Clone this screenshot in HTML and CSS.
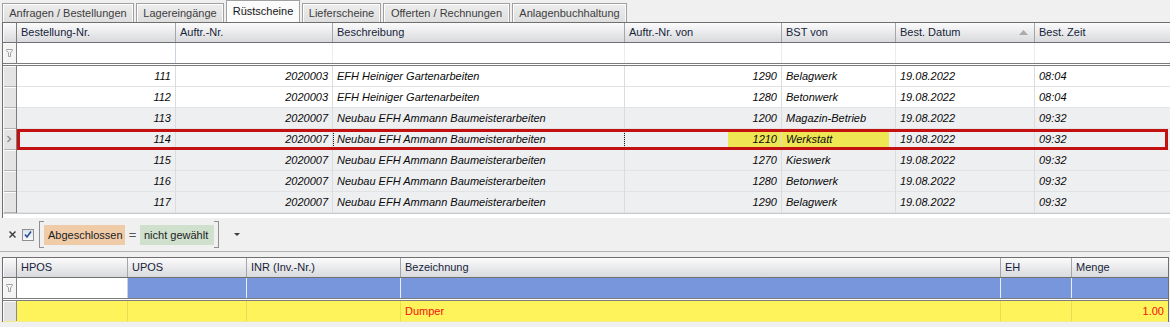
FILE: index.html
```html
<!DOCTYPE html>
<html lang="de">
<head>
    <meta charset="UTF-8">
    <title>Rüstscheine</title>
    <link rel="stylesheet" href="styles.css">
</head>
<body>
    <div class="tabs">
        <div class="tab t1">Anfragen / Bestellungen</div>
        <div class="tab t2">Lagereingänge</div>
        <div class="tab t3 active">Rüstscheine</div>
        <div class="tab t4">Lieferscheine</div>
        <div class="tab t5">Offerten / Rechnungen</div>
        <div class="tab t6">Anlagenbuchhaltung</div>
    </div>

    <div class="grid grid-top">
        <div class="row head">
            <div class="ind"></div>
            <div class="cell">Bestellung-Nr.</div>
            <div class="cell">Auftr.-Nr.</div>
            <div class="cell">Beschreibung</div>
            <div class="cell">Auftr.-Nr. von</div>
            <div class="cell">BST von</div>
            <div class="cell sorted"><span>Best. Datum</span>
                <svg width="9" height="5" viewBox="0 0 9 5"><path d="M0 5 L4.5 0 L9 5 Z" fill="#a9abae"/></svg>
            </div>
            <div class="cell">Best. Zeit</div>
        </div>
        <div class="row filter">
            <div class="ind">
                <svg width="7" height="8" viewBox="0 0 7 8"><path d="M0.5 0.5 H6.5 V1.5 L4.5 3.8 V7.5 H2.5 V3.8 L0.5 1.5 Z" fill="none" stroke="#a2a2a2"/></svg>
            </div>
            <div class="cell"></div><div class="cell"></div><div class="cell"></div><div class="cell"></div>
            <div class="cell"></div><div class="cell"></div><div class="cell"></div>
        </div>

        <div class="row">
            <div class="ind"></div>
            <div class="cell num">111</div><div class="cell num">2020003</div>
            <div class="cell">EFH Heiniger Gartenarbeiten</div><div class="cell num">1290</div>
            <div class="cell">Belagwerk</div><div class="cell">19.08.2022</div><div class="cell">08:04</div>
        </div>
        <div class="row">
            <div class="ind"></div>
            <div class="cell num">112</div><div class="cell num">2020003</div>
            <div class="cell">EFH Heiniger Gartenarbeiten</div><div class="cell num">1280</div>
            <div class="cell">Betonwerk</div><div class="cell">19.08.2022</div><div class="cell">08:04</div>
        </div>
        <div class="row alt">
            <div class="ind"></div>
            <div class="cell num">113</div><div class="cell num">2020007</div>
            <div class="cell">Neubau EFH Ammann Baumeisterarbeiten</div><div class="cell num">1200</div>
            <div class="cell">Magazin-Betrieb</div><div class="cell">19.08.2022</div><div class="cell">09:32</div>
        </div>
        <div class="row alt current">
            <span class="mark"></span>
            <div class="ind">
                <svg width="14" height="20" viewBox="0 0 14 20"><polyline points="4.5,7 7.5,10 4.5,13" fill="none" stroke="#8d8d8d" stroke-width="1.4"/></svg>
            </div>
            <div class="cell num">114</div><div class="cell num">2020007</div>
            <div class="cell focused">Neubau EFH Ammann Baumeisterarbeiten</div><div class="cell num">1210</div>
            <div class="cell">Werkstatt</div><div class="cell">19.08.2022</div><div class="cell">09:32</div>
        </div>
        <div class="row alt">
            <div class="ind"></div>
            <div class="cell num">115</div><div class="cell num">2020007</div>
            <div class="cell">Neubau EFH Ammann Baumeisterarbeiten</div><div class="cell num">1270</div>
            <div class="cell">Kieswerk</div><div class="cell">19.08.2022</div><div class="cell">09:32</div>
        </div>
        <div class="row alt">
            <div class="ind"></div>
            <div class="cell num">116</div><div class="cell num">2020007</div>
            <div class="cell">Neubau EFH Ammann Baumeisterarbeiten</div><div class="cell num">1280</div>
            <div class="cell">Betonwerk</div><div class="cell">19.08.2022</div><div class="cell">09:32</div>
        </div>
        <div class="row alt">
            <div class="ind"></div>
            <div class="cell num">117</div><div class="cell num">2020007</div>
            <div class="cell">Neubau EFH Ammann Baumeisterarbeiten</div><div class="cell num">1290</div>
            <div class="cell">Belagwerk</div><div class="cell">19.08.2022</div><div class="cell">09:32</div>
        </div>
        <div class="grid-end"></div>
    </div>

    <div class="filter-panel">
        <svg class="close" width="7" height="7" viewBox="0 0 7 7"><path d="M0.5 0.5 L6.5 6.5 M6.5 0.5 L0.5 6.5" stroke="#3a3a3a" stroke-width="1.4"/></svg>
        <span class="check">
            <svg width="10" height="10" viewBox="0 0 10 10"><polyline points="2,4.5 4,7 8,1.5" fill="none" stroke="#2f4f95" stroke-width="1.6"/></svg>
        </span>
        <span class="cond">
            <span class="field">Abgeschlossen</span>
            <span class="op">=</span>
            <span class="value">nicht gewählt</span>
        </span>
        <svg class="drop" width="6" height="3" viewBox="0 0 6 3"><path d="M0 0 H6 L3 3 Z" fill="#3c3c3c"/></svg>
    </div>

    <div class="grid grid-bottom">
        <div class="row head">
            <div class="ind"></div>
            <div class="cell">HPOS</div>
            <div class="cell">UPOS</div>
            <div class="cell">INR (Inv.-Nr.)</div>
            <div class="cell">Bezeichnung</div>
            <div class="cell">EH</div>
            <div class="cell">Menge</div>
        </div>
        <div class="row filter">
            <div class="ind">
                <svg width="7" height="8" viewBox="0 0 7 8"><path d="M0.5 0.5 H6.5 V1.5 L4.5 3.8 V7.5 H2.5 V3.8 L0.5 1.5 Z" fill="none" stroke="#a2a2a2"/></svg>
            </div>
            <div class="cell"></div>
            <div class="cell blue"></div><div class="cell blue"></div><div class="cell blue"></div>
            <div class="cell blue"></div><div class="cell blue"></div>
        </div>
        <div class="row marked">
            <div class="ind"></div>
            <div class="cell"></div><div class="cell"></div><div class="cell"></div>
            <div class="cell red">Dumper</div>
            <div class="cell"></div>
            <div class="cell num red">1.00</div>
        </div>
    </div>
</body>
</html>
```

FILE: styles.css
```css
* { margin: 0; padding: 0; box-sizing: border-box; }
body {
    width: 1170px; height: 327px; overflow: hidden;
    background: #f0f0f0;
    font-family: "Liberation Sans", Arial, sans-serif; font-size: 11px;
    color: #111;
}

/* tab strip */
.tabs { display: flex; align-items: flex-end; gap: 2px; height: 22px; padding-left: 2px; }
.tab {
    height: 19px; border: 1px solid #a0a0a0; border-bottom: none;
    background: linear-gradient(#ededed, #dedede);
    box-shadow: inset 1px 1px 0 #fff, inset -1px 0 0 #fafafa;
    text-align: center; line-height: 18px; color: #3d3d3d;
}
.tab.active { height: 22px; background: #fbfbfb; color: #151515; line-height: 20px; }
.t1 { width: 132px; } .t2 { width: 88px; } .t3 { width: 74px; }
.t4 { width: 79px; } .t5 { width: 127px; } .t6 { width: 115px; }

/* grids */
.grid { margin-left: 2px; background: #fff; border-top: 1px solid #6f6f6f; border-left: 1px solid #6f6f6f; }
.grid-top { width: 1168px; }
.grid-bottom { width: 1167px; border-right: 1px solid #6f6f6f; margin-top: 5px; }
.row { display: grid; height: 21px; border-bottom: 1px solid #e3e4e6; position: relative; }
.grid-top .row { grid-template-columns: 14px 159px 157px 292px 157px 114px 139px 1fr; }
.grid-bottom .row { grid-template-columns: 14px 111px 119px 154px 600px 71px 96px; }

.cell {
    border-right: 1px solid #dcdcdc; padding: 0 4px;
    white-space: nowrap; overflow: hidden; line-height: 20px;
    position: relative; z-index: 1;
}
.cell:last-child { border-right: none; }
.num { text-align: right; }
.ind {
    border-right: 1px solid #7d7d7d; background: #e4e4e5;
    box-shadow: inset 1px 1px 0 #fbfbfb; position: relative; z-index: 1;
}

.grid-top .row:not(.head):not(.filter) .cell { font-style: italic; color: #0a0a0a; }
.grid-top .row:not(.head):not(.filter) { border-bottom-color: #e2e3e5; }
.grid-top .row:not(.head):not(.filter) .ind { box-shadow: inset 1px 1px 0 #fbfbfb, inset 0 -1px 0 #b3b3b3; height: 21px; }
.alt { background: #eeeff1; }

.head { height: 20px; border-bottom: 1px solid #6f6f6f; }
.head .cell, .head .ind { background: linear-gradient(#fbfbfc, #d9dadd); }
.head .cell { border-right-color: #a5a6a8; line-height: 19px; color: #16243a; }
.sorted { display: flex; align-items: center; justify-content: space-between; padding-right: 6px; }

.filter { height: 23px; border-bottom: 3px double #7c7c7c; }
.filter .cell { border-right-color: #ececec; }
.filter .ind { display: flex; justify-content: center; align-items: center; background: #f4f4f5; padding-right: 1px; }

.current .mark {
    position: absolute; left: 725px; top: 3px; width: 161px; height: 16px;
    background: #efe654; z-index: 0;
}
.current::after {
    content: ""; position: absolute; left: 14px; right: 2px; top: 0; bottom: -1px;
    border: 3px solid #c31010; z-index: 2;
}
.focused { outline: 1px dotted #1a1a1a; outline-offset: -1px; }

.grid-end { height: 5px; border-top: 1px solid #c9c9c9; background: #fff; }

/* filter panel */
.filter-panel {
    height: 34px; display: flex; align-items: center; padding-left: 9px;
    border-bottom: 1px solid #b2b2b2;
}
.close { flex: none; }
.check {
    width: 12px; height: 12px; margin-left: 6px; border: 1px solid #8e8f8f;
    background: linear-gradient(#dce3ee, #f7f9fc);
    display: flex; align-items: center; justify-content: center;
}
.cond { display: flex; align-items: center; margin-left: 5px; }
.cond::before, .cond::after {
    content: ""; width: 4px; height: 25px; border: 1px solid #8f8f8f;
}
.cond::before { border-right: none; }
.cond::after { border-left: none; }
.field, .value { height: 20px; line-height: 20px; padding-left: 4px; color: #1d1d1d; }
.field { width: 81px; background: #f0cba7; }
.value { width: 74px; background: #cfe0cd; }
.op { width: 15px; text-align: center; font-size: 13px; color: #555; }
.drop { margin-left: 15px; }

/* bottom grid rows */
.blue { background: #7896dc; }
.filter .blue { border-right-color: #e9eefa; }
.filter .cell:nth-child(2) { border-right-color: #c9d2e6; }
.marked { background: #fff35b; height: 21px; border-bottom: 1px solid #f3eb8c; }
.marked .cell { border-right-color: #e7dc52; }
.marked .ind { background: #e2e2e3; border-right-color: #8a8a8a; }
.red { color: #f01010; }
```
